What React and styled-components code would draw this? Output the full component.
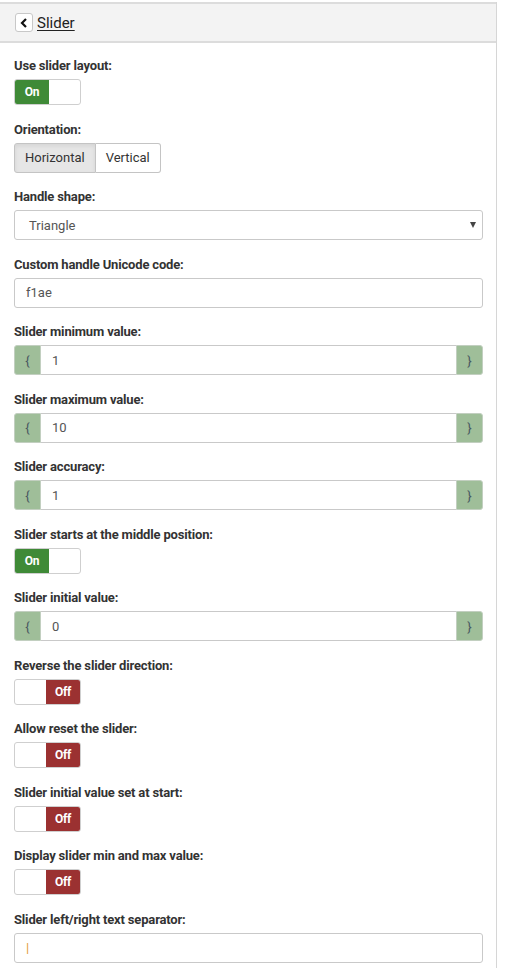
import styled, { createGlobalStyle } from "styled-components"

const GlobalStyle = createGlobalStyle`
  html, body {
    margin: 0;
    padding: 0;
    background: #fff;
  }
  body {
    font-family: Roboto, "Liberation Sans", Arial, sans-serif;
    color: #333;
  }
`

const Panel = styled.div`
  width: 497px;
  margin-top: 2px;
  border-right: 1px solid #d6d6d6;
  min-height: 966px;
  box-sizing: border-box;
`

const Header = styled.div`
  height: 41px;
  box-sizing: border-box;
  background: #f3f3f3;
  border-top: 2px solid #dcdcdc;
  border-bottom: 2px solid #dcdcdc;
  display: flex;
  align-items: center;
  padding-left: 15px;
  gap: 4px;
`

const BackButton = styled.button`
  width: 18px;
  height: 19px;
  padding: 0;
  background: #fff;
  border: 1px solid #c8c8c8;
  border-radius: 3px;
  display: flex;
  align-items: center;
  justify-content: center;
`

const HeaderTitle = styled.a`
  font-size: 15px;
  color: #222;
  text-decoration: underline;
  text-underline-offset: 2px;
`

const Body = styled.div`
  padding: 14px 13px 0 14px;
`

const Field = styled.div`
  margin-bottom: 15.5px;
`

const Label = styled.div`
  font-size: 13px;
  font-weight: 700;
  letter-spacing: -0.17px;
  line-height: 18px;
  color: #333;
  margin-bottom: 4px;
`

const Toggle = styled.div`
  width: 67px;
  height: 26px;
  box-sizing: border-box;
  border: 1px solid #cfcfcf;
  border-radius: 3px;
  overflow: hidden;
  display: flex;
  justify-content: ${p => (p.on ? "flex-start" : "flex-end")};
`

const ToggleKnob = styled.div`
  width: 34px;
  height: 100%;
  background: ${p => (p.on ? "#3f8a37" : "#9b3131")};
  color: #fff;
  font-size: 12px;
  font-weight: 700;
  letter-spacing: -0.3px;
  display: flex;
  align-items: center;
  justify-content: center;
`

const ButtonGroup = styled.div`
  display: inline-flex;
`

const GroupButton = styled.button`
  height: 30px;
  padding: 0 10px;
  font-family: inherit;
  font-size: 13px;
  color: #333;
  background: ${p => (p.active ? "#e6e6e6" : "#fff")};
  box-shadow: ${p => (p.active ? "inset 0 2px 4px rgba(0,0,0,0.08)" : "none")};
  border: 1px solid #c4c4c4;
  border-radius: 3px;
  &:first-child {
    border-top-right-radius: 0;
    border-bottom-right-radius: 0;
  }
  &:last-child {
    border-left: none;
    border-top-left-radius: 0;
    border-bottom-left-radius: 0;
  }
`

const SelectBox = styled.div`
  height: 30px;
  box-sizing: border-box;
  border: 1px solid #c9c9c9;
  border-radius: 3px;
  display: flex;
  align-items: center;
  justify-content: space-between;
  padding: 0 6px 0 14px;
  font-size: 13px;
  color: #555;
`

const Caret = styled.span`
  width: 0;
  height: 0;
  border-left: 3px solid transparent;
  border-right: 3px solid transparent;
  border-top: 6px solid #444;
`

const TextInput = styled.div`
  height: 30px;
  box-sizing: border-box;
  border: 1px solid #c9c9c9;
  border-radius: 3px;
  display: flex;
  align-items: center;
  padding: 0 11px;
  font-size: 13px;
  color: ${p => p.color || "#555"};
`

const InputGroup = styled.div`
  display: flex;
  height: 30px;
`

const Addon = styled.div`
  width: 27px;
  box-sizing: border-box;
  background: #9fbe99;
  border: 1px solid #c2cfc0;
  border-radius: ${p => (p.side === "left" ? "3px 0 0 3px" : "0 3px 3px 0")};
  display: flex;
  align-items: center;
  justify-content: center;
  font-size: 13px;
  color: #4a5862;
`

const GroupInput = styled.div`
  flex: 1;
  box-sizing: border-box;
  border-top: 1px solid #c9c9c9;
  border-bottom: 1px solid #c9c9c9;
  display: flex;
  align-items: center;
  padding: 0 11px;
  font-size: 13px;
  color: #555;
`

const OnOff = ({ on }) => (
  <Toggle on={on}>
    <ToggleKnob on={on}>{on ? "On" : "Off"}</ToggleKnob>
  </Toggle>
)

const Braced = ({ value }) => (
  <InputGroup>
    <Addon side="left">{"{"}</Addon>
    <GroupInput>{value}</GroupInput>
    <Addon side="right">{"}"}</Addon>
  </InputGroup>
)

export default function App() {
  return (
    <Panel>
      <GlobalStyle />
      <Header>
        <BackButton>
          <svg width="8" height="10" viewBox="0 0 8 10">
            <path d="M6 1 L2 5 L6 9" fill="none" stroke="#111" strokeWidth="2.2" />
          </svg>
        </BackButton>
        <HeaderTitle>Slider</HeaderTitle>
      </Header>
      <Body>
        <Field>
          <Label>Use slider layout:</Label>
          <OnOff on />
        </Field>
        <Field>
          <Label>Orientation:</Label>
          <ButtonGroup>
            <GroupButton active>Horizontal</GroupButton>
            <GroupButton>Vertical</GroupButton>
          </ButtonGroup>
        </Field>
        <Field>
          <Label>Handle shape:</Label>
          <SelectBox>
            Triangle
            <Caret />
          </SelectBox>
        </Field>
        <Field>
          <Label>Custom handle Unicode code:</Label>
          <TextInput>f1ae</TextInput>
        </Field>
        <Field>
          <Label>Slider minimum value:</Label>
          <Braced value="1" />
        </Field>
        <Field>
          <Label>Slider maximum value:</Label>
          <Braced value="10" />
        </Field>
        <Field>
          <Label>Slider accuracy:</Label>
          <Braced value="1" />
        </Field>
        <Field>
          <Label>Slider starts at the middle position:</Label>
          <OnOff on />
        </Field>
        <Field>
          <Label>Slider initial value:</Label>
          <Braced value="0" />
        </Field>
        <Field>
          <Label>Reverse the slider direction:</Label>
          <OnOff />
        </Field>
        <Field>
          <Label>Allow reset the slider:</Label>
          <OnOff />
        </Field>
        <Field>
          <Label>Slider initial value set at start:</Label>
          <OnOff />
        </Field>
        <Field>
          <Label>Display slider min and max value:</Label>
          <OnOff />
        </Field>
        <Field>
          <Label>Slider left/right text separator:</Label>
          <TextInput color="#e39b3b">|</TextInput>
        </Field>
      </Body>
    </Panel>
  )
}
